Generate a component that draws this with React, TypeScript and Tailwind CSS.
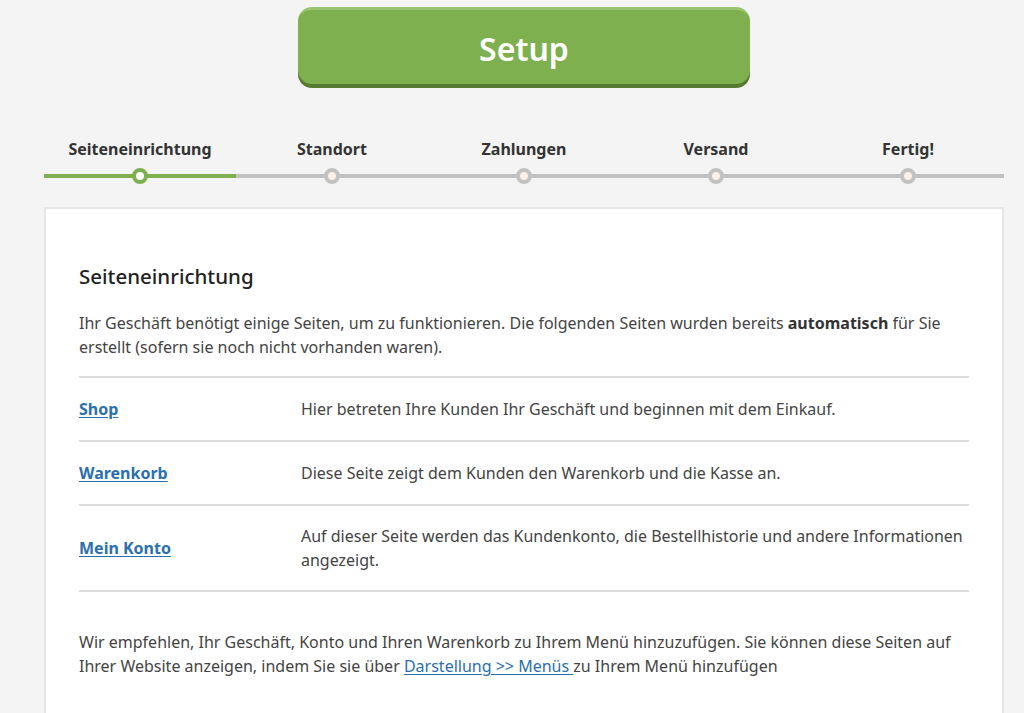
const STEPS = ["Seiteneinrichtung", "Standort", "Zahlungen", "Versand", "Fertig!"];

const PAGES = [
  { name: "Shop", text: "Hier betreten Ihre Kunden Ihr Geschäft und beginnen mit dem Einkauf." },
  { name: "Warenkorb", text: "Diese Seite zeigt dem Kunden den Warenkorb und die Kasse an." },
  {
    name: "Mein Konto",
    text: "Auf dieser Seite werden das Kundenkonto, die Bestellhistorie und andere Informationen angezeigt.",
  },
];

function Steps({ active }: { active: number }) {
  return (
    <ol className="mt-[55px] flex">
      {STEPS.map((label, i) => {
        const done = i <= active;
        return (
          <li key={label} className="flex w-[192px] flex-col items-center">
            <span className="text-[16px] font-bold leading-[20px] text-[#333]">{label}</span>
            <div className="relative mt-[9px] flex h-[16px] w-full items-center justify-center">
              <div className={`absolute inset-x-0 top-[6px] h-[4px] ${done ? "bg-[#7fb04f]" : "bg-[#c2c2c2]"}`} />
              <div
                className={`relative h-[16px] w-[16px] rounded-full border-[4px] ${
                  done ? "border-[#7fb04f] bg-white" : "border-[#c2c2c2] bg-[#fbf3ea]"
                }`}
              />
            </div>
          </li>
        );
      })}
    </ol>
  );
}

export default function App() {
  return (
    <div className="min-h-screen bg-[#f4f4f4] font-['Noto_Sans','Open_Sans',sans-serif] text-[#444]">
      <div className="ml-[44px] w-[960px] pt-[7px]">
        <div className="mx-auto flex h-[77px] w-[452px] items-center justify-center rounded-[14px] border-t-[3px] border-[#9ac46f] bg-[#7fb04f] pt-[4px] shadow-[0_4px_0_#557a32]">
          <span className="text-[32px] font-semibold leading-none text-white">Setup</span>
        </div>

        <Steps active={0} />

        <div className="mt-[23px] border-2 border-[#e6e6e6] bg-white px-[33px] pt-[52px] pb-[40px]">
          <h1 className="text-[20.5px] font-medium leading-[30px] text-[#222]">Seiteneinrichtung</h1>
          <p className="mt-[20px] text-[16px] leading-[24px]">
            Ihr Geschäft benötigt einige Seiten, um zu funktionieren. Die folgenden Seiten wurden bereits{" "}
            <strong className="font-bold text-[#333]">automatisch</strong> für Sie erstellt (sofern sie noch nicht
            vorhanden waren).
          </p>

          <table className="mt-[17px] w-full border-collapse border-t-2 border-[#dcdcdc] text-[16px]">
            <tbody>
              {PAGES.map((p) => (
                <tr key={p.name} className="border-b-2 border-[#dcdcdc]">
                  <td className="w-[222px] py-[19px] align-middle">
                    <a href="#" className="font-bold text-[#2a6fb0] underline underline-offset-2">
                      {p.name}
                    </a>
                  </td>
                  <td className="py-[18px] leading-[24px]">{p.text}</td>
                </tr>
              ))}
            </tbody>
          </table>

          <p className="mt-[38px] pr-[10px] text-[16px] leading-[24px]">
            Wir empfehlen, Ihr Geschäft, Konto und Ihren Warenkorb zu Ihrem Menü hinzuzufügen. Sie können diese
            Seiten auf Ihrer Website anzeigen, indem Sie sie über{" "}
            <a href="#" className="text-[#2a6fb0] underline underline-offset-2">
              Darstellung &gt;&gt; Menüs{" "}
            </a>
            zu Ihrem Menü hinzufügen
          </p>
        </div>
      </div>
    </div>
  );
}
